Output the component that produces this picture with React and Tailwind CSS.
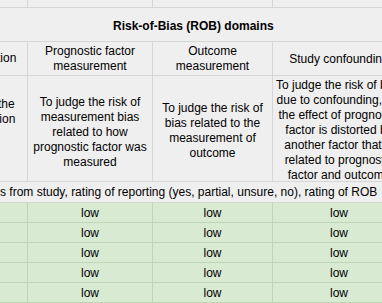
import React from 'react';

const cols = ['w-[121px]', 'w-[125px]', 'w-[120px]', 'w-[133px]'];

const Cell = ({ w, green, children, className = '' }) => (
  <div
    className={`${w} shrink-0 h-full box-border border-r flex flex-col items-center justify-center text-center whitespace-nowrap leading-[15px] ${
      green ? 'border-[#bfd5b7]' : 'border-[#d6d6d6]'
    } ${className}`}
  >
    {children}
  </div>
);

const Lines = ({ lines }) => lines.map((l, i) => <div key={i}>{l}</div>);

const Row = ({ h, green, children }) => (
  <div
    className={`${h} flex box-border border-b ${
      green ? 'bg-[#d9ead3] border-[#bfd5b7]' : 'bg-[#efefef] border-[#d6d6d6]'
    }`}
  >
    {children}
  </div>
);

const App = () => {
  const lowRows = [1, 2, 3, 4, 5];

  return (
    <div className="w-[382px] h-[303px] overflow-hidden bg-white text-[12px] text-black font-['Liberation_Sans',Arial,sans-serif]">
      <div className="ml-[-93px] w-[499px]">
        <Row h="h-[8px]">
          {cols.map((w, i) => (
            <Cell key={i} w={w} />
          ))}
        </Row>

        <Row h="h-[34px]">
          <div className="flex items-center pl-[206px] pt-[2px] font-bold whitespace-nowrap">
            Risk-of-Bias (ROB) domains
          </div>
        </Row>

        <Row h="h-[34px]">
          <Cell w={cols[0]}>Study participation</Cell>
          <Cell w={cols[1]}>
            <Lines lines={['Prognostic factor', 'measurement']} />
          </Cell>
          <Cell w={cols[2]}>
            <Lines lines={['Outcome', 'measurement']} />
          </Cell>
          <Cell w={cols[3]} className="pt-[2px]">Study confounding</Cell>
        </Row>

        <Row h="h-[106px]">
          <Cell w={cols[0]} className="pb-[4px]">
            <Lines lines={['bias related to the', 'study participation', '(selection)', 'bias']} />
          </Cell>
          <Cell w={cols[1]} className="pt-[7px]">
            <Lines
              lines={[
                'To judge the risk of',
                'measurement bias',
                'related to how',
                'prognostic factor was',
                'measured',
              ]}
            />
          </Cell>
          <Cell w={cols[2]} className="pt-[5px]">
            <Lines
              lines={['To judge the risk of', 'bias related to the', 'measurement of', 'outcome']}
            />
          </Cell>
          <Cell w={cols[3]} className="pt-[4px] leading-[14px]">
            <Lines
              lines={[
                'To judge the risk of bias',
                'due to confounding, i.e.',
                'the effect of prognostic',
                'factor is distorted by',
                'another factor that is',
                'related to prognostic',
                'factor and outcome',
              ]}
            />
          </Cell>
        </Row>

        <Row h="h-[21px]">
          <div className="flex items-center pl-[93px] whitespace-nowrap">
            s from study, rating of reporting (yes, partial, unsure, no), rating of ROB
          </div>
        </Row>

        {lowRows.map(r => (
          <Row key={r} h="h-[20px]" green>
            <Cell w={cols[0]} green />
            <Cell w={cols[1]} green className="pt-[2px]">low</Cell>
            <Cell w={cols[2]} green className="pt-[2px]">low</Cell>
            <Cell w={cols[3]} green className="pt-[2px]">low</Cell>
          </Row>
        ))}
      </div>
    </div>
  );
};

export default App;
